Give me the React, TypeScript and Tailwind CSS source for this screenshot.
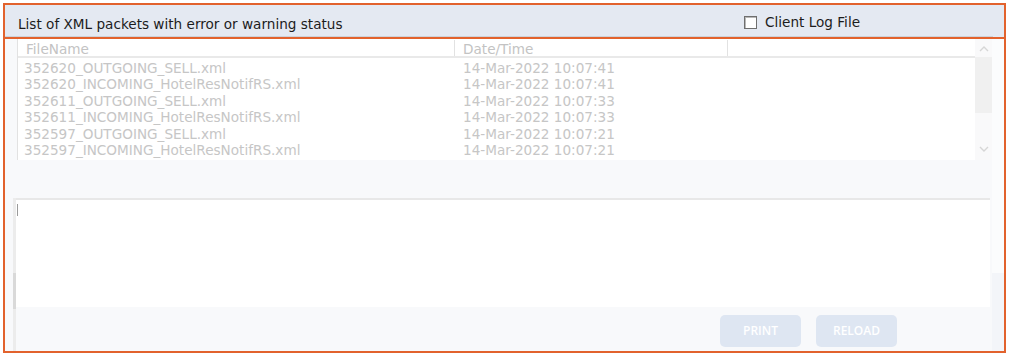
import React from 'react';

const rows = [
  { file: '352620_OUTGOING_SELL.xml', date: '14-Mar-2022 10:07:41' },
  { file: '352620_INCOMING_HotelResNotifRS.xml', date: '14-Mar-2022 10:07:41' },
  { file: '352611_OUTGOING_SELL.xml', date: '14-Mar-2022 10:07:33' },
  { file: '352611_INCOMING_HotelResNotifRS.xml', date: '14-Mar-2022 10:07:33' },
  { file: '352597_OUTGOING_SELL.xml', date: '14-Mar-2022 10:07:21' },
  { file: '352597_INCOMING_HotelResNotifRS.xml', date: '14-Mar-2022 10:07:21' },
];

function Chevron({ down }: { down?: boolean }) {
  return (
    <svg width="10" height="6" viewBox="0 0 10 6" className={down ? 'rotate-180' : ''}>
      <path d="M1 5 L5 1 L9 5" fill="none" stroke="#d6d6d6" strokeWidth="1.4" />
    </svg>
  );
}

export default function App() {
  return (
    <div className="w-[1010px] h-[357px] bg-white pt-[3px] pl-[3px] font-['DejaVu_Sans',sans-serif]">
      <div className="w-[1003px] h-[350px] border-2 border-[#e2622d] flex flex-col bg-[#f8f9fb]">
        {/* header */}
        <div className="h-[34px] border-b-2 border-[#e2622d] bg-[#e4e9f2]">
          <div className="h-[32px] border-b border-[#cdd2da] mr-[11px] flex items-end pb-[4px] pl-[13px] text-[13.6px] leading-[16px] text-[#1c1c1c]">
            <span className="flex-1">List of XML packets with error or warning status</span>
            <label className="flex items-center gap-[8px] w-[249px] mb-[2px]">
              <span className="w-[13px] h-[13px] border border-[#6f6f6f] bg-white shadow-[inset_1px_1px_0_#b8b8b8]" />
              <span>Client Log File</span>
            </label>
          </div>
        </div>

        {/* body */}
        <div className="flex-1 flex">
          <div className="flex-1 flex flex-col">
            {/* table */}
            <div className="h-[121px] ml-[12px] flex bg-white border-l border-[#e2e2e2] text-[13.6px] text-[#c6c6c6]">
              <div className="flex-1 flex flex-col">
                <div className="h-[19px] flex border-b-2 border-[#e9e9e9] leading-[18px] pt-[1px] text-[#c3c3c3]">
                  <div className="w-[437px] pl-[8px] border-r border-[#e2e2e2]">FileName</div>
                  <div className="w-[273px] pl-[8px] border-r border-[#e2e2e2]">Date/Time</div>
                  <div className="flex-1" />
                </div>
                <div className="pt-[2px] leading-[16.4px] overflow-hidden">
                  {rows.map((r) => (
                    <div key={r.file} className="flex">
                      <div className="w-[437px] pl-[6px] whitespace-nowrap">{r.file}</div>
                      <div className="w-[273px] pl-[8px] whitespace-nowrap">{r.date}</div>
                    </div>
                  ))}
                </div>
              </div>
              <div className="w-[17px] bg-[#f9f9fa] flex flex-col items-center">
                <div className="h-[18px] flex items-center justify-center pt-[2px]">
                  <Chevron />
                </div>
                <div className="w-full h-[56px] bg-[#f0f0f0]" />
                <div className="flex-1" />
                <div className="h-[18px] flex items-center justify-center pb-[4px]">
                  <Chevron down />
                </div>
              </div>
            </div>

            <div className="h-[38px]" />

            {/* text area + footer */}
            <div className="flex-1 flex pl-[8px] pr-[2px]">
              <div className="w-[3px] flex flex-col bg-[#ececec]">
                <div className="h-[75px]" />
                <div className="h-[36px] bg-[#d9d9d9]" />
              </div>
              <div className="flex-1 flex flex-col">
                <div className="h-[109px] bg-white border-t-2 border-[#e8e8e8] pt-[4px] pl-[1px]">
                  <div className="w-[1px] h-[12px] bg-[#9a9a9a]" />
                </div>
                <div className="flex-1 flex justify-end items-start pt-[8px] pr-[93px] gap-[15px]">
                  <button className="w-[81px] h-[32px] rounded-[5px] bg-[#dee6f2] text-white text-[12px] font-semibold font-['Open_Sans',sans-serif]">
                    PRINT
                  </button>
                  <button className="w-[81px] h-[32px] rounded-[5px] bg-[#dee6f2] text-white text-[12px] font-semibold font-['Open_Sans',sans-serif]">
                    RELOAD
                  </button>
                </div>
              </div>
            </div>
          </div>
          <div className="w-[12px] flex flex-col">
            <div className="h-[234px] bg-[#fbfcfd]" />
            <div className="flex-1 bg-[#f3f5f9]" />
          </div>
        </div>
      </div>
    </div>
  );
}
